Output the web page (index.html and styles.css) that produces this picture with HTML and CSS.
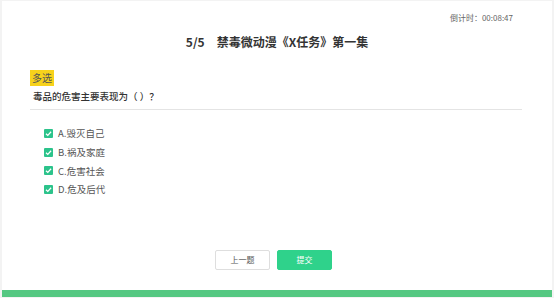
FILE: index.html
```html
<!DOCTYPE html>
<html lang="zh">
<head>
<meta charset="utf-8">
<link rel="stylesheet" href="styles.css">
</head>
<body>
<div class="page">
  <div class="timer">倒计时：00:08:47</div>
  <h1 class="title"><span class="num">5/5</span>禁毒微动漫《X任务》第一集</h1>
  <div class="content">
    <span class="tag">多选</span>
    <div class="question">毒品的危害主要表现为（ ）？</div>
    <ul class="options">
      <li class="option"><span class="check"><svg viewBox="0 0 10 10" width="9" height="9"><path d="M2.2 5.2 L4.2 7.1 L7.9 3.1" fill="none" stroke="#fff" stroke-width="1.4"/></svg></span>A.毁灭自己</li>
      <li class="option"><span class="check"><svg viewBox="0 0 10 10" width="9" height="9"><path d="M2.2 5.2 L4.2 7.1 L7.9 3.1" fill="none" stroke="#fff" stroke-width="1.4"/></svg></span>B.祸及家庭</li>
      <li class="option"><span class="check"><svg viewBox="0 0 10 10" width="9" height="9"><path d="M2.2 5.2 L4.2 7.1 L7.9 3.1" fill="none" stroke="#fff" stroke-width="1.4"/></svg></span>C.危害社会</li>
      <li class="option"><span class="check"><svg viewBox="0 0 10 10" width="9" height="9"><path d="M2.2 5.2 L4.2 7.1 L7.9 3.1" fill="none" stroke="#fff" stroke-width="1.4"/></svg></span>D.危及后代</li>
    </ul>
  </div>
  <div class="actions">
    <button class="btn btn-prev">上一题</button>
    <button class="btn btn-submit">提交</button>
  </div>
  <div class="bar"></div>
</div>
</body>
</html>
```
FILE: styles.css
```css
html, body {
  margin: 0;
  padding: 0;
  background: #fff;
}
body {
  width: 554px;
  height: 298px;
  font-family: "Noto Sans CJK SC", "Noto Sans", sans-serif;
  color: #333;
}
.page {
  box-sizing: border-box;
  height: 298px;
  border: 2px solid #f3f3f3;
  border-top-width: 1px;
  border-bottom-width: 1px;
  display: flex;
  flex-direction: column;
}
.timer {
  align-self: flex-end;
  margin: 11px 39px 0 0;
  font-size: 8px;
  line-height: 12px;
  color: #666;
}
.title {
  margin: 9px 0 0;
  text-align: center;
  font-size: 12px;
  line-height: 18px;
  font-weight: 700;
  color: #333;
}
.num {
  margin-right: 12px;
}
.content {
  margin: 0 30px 0 28px;
  padding-top: 19px;
  display: flex;
  flex-direction: column;
  align-items: flex-start;
}
.tag {
  background: #f7d21b;
  color: #555;
  font-size: 10px;
  line-height: 16px;
  padding: 0 2px;
}
.question {
  align-self: stretch;
  margin-top: 3px;
  padding: 0 0 6px 3px;
  border-bottom: 1px solid #e4e4e4;
  font-size: 9.5px;
  line-height: 14px;
  font-weight: 500;
  color: #333;
}
.options {
  list-style: none;
  margin: 14px 0 0 14px;
  padding: 0;
}
.option {
  display: flex;
  align-items: center;
  height: 18.7px;
  font-size: 9.5px;
  color: #555;
}
.check {
  display: flex;
  width: 9px;
  height: 9px;
  margin-right: 5px;
  background: #2cc38b;
  border-radius: 1px;
}
.actions {
  display: flex;
  justify-content: center;
  gap: 7px;
  margin-top: 51px;
  padding-right: 7px;
}
.btn {
  box-sizing: border-box;
  width: 55px;
  height: 20px;
  font-family: inherit;
  font-size: 8px;
  border-radius: 2px;
  padding: 0;
  cursor: pointer;
}
.btn-prev {
  background: #fff;
  border: 1px solid #dedede;
  color: #555;
}
.btn-submit {
  background: #2fd28b;
  border: 1px solid #2fd28b;
  color: #fff;
}
.bar {
  margin-top: auto;
  height: 7px;
  background: #55c882;
}
```
